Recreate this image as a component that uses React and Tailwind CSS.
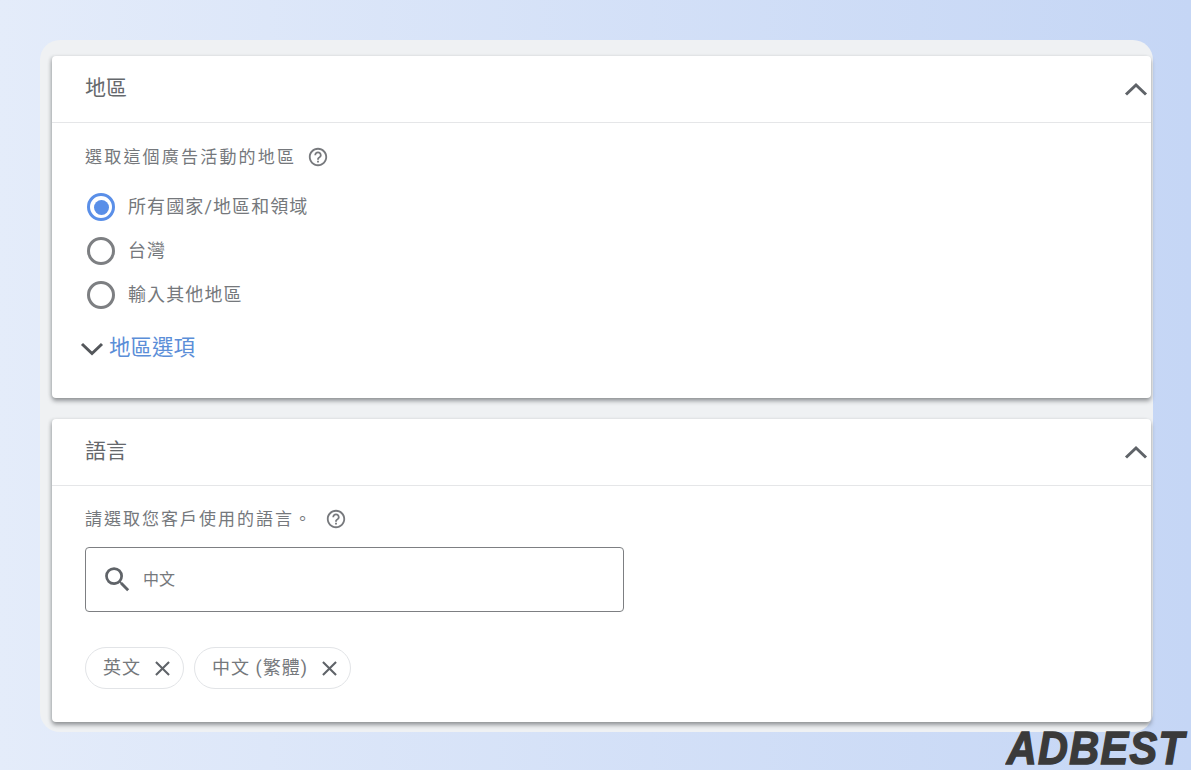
import React from 'react';

const FONT = 'font-["Roboto","Noto_Sans_CJK_TC",sans-serif]';

const RADIOS = [
  { label: '所有國家/地區和領域', checked: true },
  { label: '台灣' },
  { label: '輸入其他地區' },
];

function ChevronUp() {
  return (
    <svg width="24" height="14" viewBox="0 0 24 14" fill="none" className="mr-[3px] text-[#5f6368]">
      <path d="M2 12.5 12 3l10 9.5" stroke="currentColor" strokeWidth="3" />
    </svg>
  );
}

function Help() {
  return (
    <svg width="22" height="22" viewBox="0 0 24 24" fill="#77797d">
      <path d="M11 18h2v-2h-2v2zm1-16C6.48 2 2 6.48 2 12s4.48 10 10 10 10-4.48 10-10S17.52 2 12 2zm0 18c-4.41 0-8-3.59-8-8s3.59-8 8-8 8 3.59 8 8-3.59 8-8 8zm0-14c-2.21 0-4 1.79-4 4h2c0-1.1.9-2 2-2s2 .9 2 2c0 2-3 1.75-3 5h2c0-2.25 3-2.5 3-5 0-2.21-1.79-4-4-4z" />
    </svg>
  );
}

function Close() {
  return (
    <svg width="25" height="25" viewBox="0 0 24 24" fill="#5f6368">
      <path d="M19 6.41 17.59 5 12 10.59 6.41 5 5 6.41 10.59 12 5 17.59 6.41 19 12 13.41 17.59 19 19 17.59 13.41 12z" />
    </svg>
  );
}

function Radio({ checked }) {
  if (checked) {
    return (
      <span className="flex h-[28px] w-[28px] shrink-0 items-center justify-center rounded-full border-[3px] border-[#5a8fe8]">
        <span className="h-[15px] w-[15px] rounded-full bg-[#5a8fe8]" />
      </span>
    );
  }
  return <span className="h-[28px] w-[28px] shrink-0 rounded-full border-[3px] border-[#7d7f82]" />;
}

function Chip({ label, className }) {
  return (
    <div className={`flex h-[42px] items-center justify-between rounded-full border border-[#e2e4e7] pl-[17px] pr-[8px] ${className}`}>
      <span className="text-[18px] leading-none tracking-[1px] text-[#75787c]">{label}</span>
      <Close />
    </div>
  );
}

function Section({ title, className, children }) {
  return (
    <section className={`rounded-[4px] bg-white shadow-[0_3px_4px_rgba(60,64,67,0.5),-2px_0_3px_rgba(60,64,67,0.1)] ${className}`}>
      <div className="flex h-[67px] items-center justify-between border-b border-[#e5e6e8] pl-[33px]">
        <h2 className="mb-[2px] text-[21px] font-normal leading-none text-[#65686c]">{title}</h2>
        <ChevronUp />
      </div>
      {children}
    </section>
  );
}

export default function App() {
  return (
    <div className={`relative h-[770px] w-[1191px] overflow-hidden bg-gradient-to-r from-[#e4ecfa] to-[#c5d6f5] p-[40px] ${FONT}`}>
      {/* Panel */}
      <div className="flex h-[692px] w-[1113px] flex-col gap-[21px] rounded-[20px] bg-[#eff1f3] pb-[10px] pl-[12px] pr-[2px] pt-[16px]">
        {/* Location */}
        <Section title="地區" className="h-[342px] shrink-0">
          <div className="flex items-center gap-[11px] pl-[33px] pt-[23px]">
            <span className="text-[17px] leading-[22px] tracking-[2.2px] text-[#75787c]">選取這個廣告活動的地區</span>
            <Help />
          </div>
          <div className="mt-[25px] flex flex-col gap-[16px] pl-[35px]">
            {RADIOS.map((r) => (
              <label key={r.label} className="flex items-center gap-[13px]">
                <Radio checked={r.checked} />
                <span className="text-[18px] leading-none tracking-[1.1px] text-[#75787c]">{r.label}</span>
              </label>
            ))}
          </div>
          <div className="mt-[28px] flex items-center gap-[5px] pl-[28px]">
            <svg width="24" height="14" viewBox="0 0 24 14" fill="none" className="mt-[3px] text-[#54575b]">
              <path d="M2 2l10 9.5L22 2" stroke="currentColor" strokeWidth="3" />
            </svg>
            <span className="text-[21.5px] leading-none text-[#5b8ed8]">地區選項</span>
          </div>
        </Section>

        {/* Language */}
        <Section title="語言" className="flex-1">
          <div className="flex items-center gap-[12px] pl-[33px] pt-[22px]">
            <span className="text-[17px] leading-[22px] tracking-[2px] text-[#75787c]">請選取您客戶使用的語言。</span>
            <Help />
          </div>
          <div className="ml-[33px] mt-[17px] flex h-[65px] w-[539px] items-center rounded-[4px] border border-[#7d7f82] pl-[15px]">
            <svg width="33" height="33" viewBox="0 0 24 24" fill="#5f6368">
              <path d="M15.5 14h-.79l-.28-.27A6.471 6.471 0 0 0 16 9.5 6.5 6.5 0 1 0 9.5 16c1.61 0 3.09-.59 4.23-1.57l.27.28v.79l5 4.99L20.49 19l-4.99-5zm-6 0C7.01 14 5 11.99 5 9.5S7.01 5 9.5 5 14 7.01 14 9.5 11.99 14 9.5 14z" />
            </svg>
            <span className="ml-[9px] text-[16px] leading-none text-[#75787c]">中文</span>
          </div>
          <div className="ml-[33px] mt-[35px] flex gap-[10px]">
            <Chip label="英文" className="w-[99px]" />
            <Chip label="中文 (繁體)" className="w-[157px]" />
          </div>
        </Section>
      </div>

      {/* Watermark */}
      <span className="absolute bottom-[3px] right-[6px] origin-right scale-x-[0.9] font-['Liberation_Sans',sans-serif] text-[46px] font-bold italic leading-[38px] tracking-[1.5px] text-[#3a3a3a] [-webkit-text-stroke:1.5px_#3a3a3a]">
        ADBEST
      </span>
    </div>
  );
}
